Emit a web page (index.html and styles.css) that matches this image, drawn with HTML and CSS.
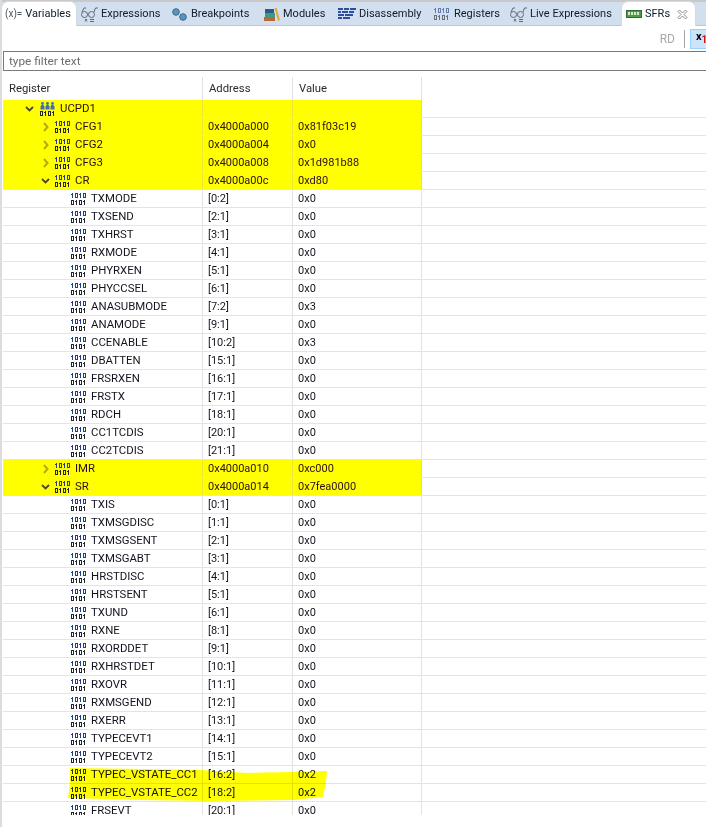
FILE: index.html
```html
<!DOCTYPE html>
<html lang="en">
<head>
<meta charset="utf-8">
<title>SFRs</title>
<link rel="stylesheet" href="styles.css">
</head>
<body>
<svg class="defs" width="0" height="0" aria-hidden="true">
  <symbol id="bits" viewBox="0 0 15 12">
    <g fill="#1d3f8f">
      <rect x="1" y="0" width="1" height="5"/><rect x="0" y="1" width="1" height="1"/>
      <path d="M4 0h3v5H4zM5 1v3h1V1z" fill-rule="evenodd"/>
      <rect x="9" y="0" width="1" height="5"/><rect x="8" y="1" width="1" height="1"/>
      <path d="M12 0h3v5h-3zM13 1v3h1V1z" fill-rule="evenodd"/>
    </g>
    <g fill="#22252b">
      <path d="M0 7h3v5H0zM1 8v3h1V8z" fill-rule="evenodd"/>
      <rect x="5" y="7" width="1" height="5"/><rect x="4" y="8" width="1" height="1"/>
      <path d="M8 7h3v5H8zM9 8v3h1V8z" fill-rule="evenodd"/>
      <rect x="13" y="7" width="1" height="5"/><rect x="12" y="8" width="1" height="1"/>
    </g>
  </symbol>
  <symbol id="group" viewBox="0 0 15 14">
    <g fill="#3f6fb5">
      <circle cx="2.500" cy="1.500" r="1.400"/><circle cx="7.500" cy="1.500" r="1.400"/><circle cx="12.500" cy="1.500" r="1.400"/>
      <path d="M.5 7.500V4.500L1.500 3h2l1 1.500v3zM5.500 7.500V4.500L6.500 3h2l1 1.500v3zM10.500 7.500V4.500L11.500 3h2l1 1.500v3z"/>
    </g>
    <g fill="#22252b">
      <path d="M0 9h3v5H0zM1 10v3h1v-3z" fill-rule="evenodd"/>
      <rect x="5" y="9" width="1" height="5"/><rect x="4" y="10" width="1" height="1"/>
      <path d="M8 9h3v5H8zM9 10v3h1v-3z" fill-rule="evenodd"/>
      <rect x="13" y="9" width="1" height="5"/><rect x="12" y="10" width="1" height="1"/>
    </g>
  </symbol>
  <symbol id="open" viewBox="0 0 9 6"><path d="M1 1l3.500 3.500L8 1" fill="none" stroke="#4a4a20" stroke-width="1.800"/></symbol>
  <symbol id="closed" viewBox="0 0 6 10"><path d="M1 1l3.500 4L1 9" fill="none" stroke="#b3ab10" stroke-width="2"/></symbol>
  <symbol id="glasses" viewBox="0 0 18 15">
    <g fill="none" stroke="#5d6b78" stroke-width="1">
      <circle cx="3.500" cy="7.500" r="3"/><circle cx="10.500" cy="7.500" r="3"/>
      <path d="M6.500 7h1M13 5l1.500-4H17M1 5l2-4h2"/>
      <path d="M9 14.500h4M9 12.500h4"/><path d="M4 12l2 2.500M6 12l-2 2.500"/>
    </g>
  </symbol>
</svg>

<div class="tabbar">
  <div class="tab tab-active tab-vars"><span class="var-glyph">(x)=</span><span>Variables</span></div>
  <div class="tab tab-expr"><svg class="ti-glasses"><use href="#glasses"/></svg><span>Expressions</span></div>
  <div class="tab tab-break">
    <svg class="ti-break" viewBox="0 0 15 13"><circle cx="4" cy="4" r="3.300" fill="#5b93bd" stroke="#3a6b8e"/><circle cx="11" cy="9" r="3.300" fill="#5b93bd" stroke="#3a6b8e"/></svg>
    <span>Breakpoints</span></div>
  <div class="tab tab-mod">
    <svg class="ti-mod" viewBox="0 0 16 13"><rect x="0" y="9" width="11" height="4" fill="#b5683a"/><rect x="1" y="5" width="10" height="4" fill="#3e9a82"/><rect x="1" y="1" width="9" height="4" fill="#2b5a8c"/><path d="M10.500 0l2-.5 3.500 12.500-2 1z" fill="#e4a93a"/></svg>
    <span>Modules</span></div>
  <div class="tab tab-dis">
    <svg class="ti-dis" viewBox="0 0 18 12"><g fill="#2b4d9c"><rect width="5" height="2"/><rect x="6" width="5" height="2"/><rect x="12" width="6" height="2"/><rect y="3" width="3" height="2"/><rect x="4" y="3" width="6" height="2"/><rect x="11" y="3" width="5" height="2"/><rect y="6" width="6" height="2"/><rect x="7" y="6" width="8" height="2"/><rect y="9" width="4" height="2"/><rect x="5" y="9" width="7" height="2"/></g></svg>
    <span>Disassembly</span></div>
  <div class="tab tab-reg"><svg class="ti-bits ti-gray"><use href="#bits"/></svg><span>Registers</span></div>
  <div class="tab tab-live"><svg class="ti-glasses"><use href="#glasses"/></svg><span>Live Expressions</span></div>
  <div class="tab tab-active tab-sfr">
    <svg class="ti-chip" viewBox="0 0 16 10"><rect width="15" height="7" x=".5" y="1.500" fill="#4e9a4a" stroke="#2e6a2e"/><g fill="#d9e8c8"><rect x="2" y="3" width="2" height="3"/><rect x="5" y="3" width="2" height="3"/><rect x="8" y="3" width="2" height="3"/><rect x="11" y="3" width="2" height="3"/></g></svg>
    <span>SFRs</span>
    <svg class="ti-close" viewBox="0 0 11 11"><path d="M1 2.500L2.500 1l3 3 3-3L10 2.500l-3 3 3 3L8.500 10l-3-3-3 3L1 8.500l3-3z" fill="#fff" stroke="#8c8c8c"/></svg>
  </div>
</div>

<div class="toolbar">
  <span class="rd">RD</span>
  <span class="tool-sep"></span>
  <span class="tool-btn">x<sub class="tool-sub">1</sub></span>
</div>

<div class="filter">type filter text</div>

<div class="tree">
  <div class="row header"><div class="cell">Register</div><div class="cell">Address</div><div class="cell">Value</div></div>
  <div class="rows">
    <div class="row hl"><div class="cell l0"><svg class="tw-open"><use href="#open"/></svg><svg class="ic-group"><use href="#group"/></svg>UCPD1</div><div class="cell"></div><div class="cell"></div></div>
    <div class="row hl"><div class="cell l1"><svg class="tw-closed"><use href="#closed"/></svg><svg class="ic"><use href="#bits"/></svg>CFG1</div><div class="cell">0x4000a000</div><div class="cell">0x81f03c19</div></div>
    <div class="row hl"><div class="cell l1"><svg class="tw-closed"><use href="#closed"/></svg><svg class="ic"><use href="#bits"/></svg>CFG2</div><div class="cell">0x4000a004</div><div class="cell">0x0</div></div>
    <div class="row hl"><div class="cell l1"><svg class="tw-closed"><use href="#closed"/></svg><svg class="ic"><use href="#bits"/></svg>CFG3</div><div class="cell">0x4000a008</div><div class="cell">0x1d981b88</div></div>
    <div class="row hl"><div class="cell l1"><svg class="tw-open"><use href="#open"/></svg><svg class="ic"><use href="#bits"/></svg>CR</div><div class="cell">0x4000a00c</div><div class="cell">0xd80</div></div>
    <div class="row"><div class="cell l2"><svg class="ic"><use href="#bits"/></svg>TXMODE</div><div class="cell">[0:2]</div><div class="cell">0x0</div></div>
    <div class="row"><div class="cell l2"><svg class="ic"><use href="#bits"/></svg>TXSEND</div><div class="cell">[2:1]</div><div class="cell">0x0</div></div>
    <div class="row"><div class="cell l2"><svg class="ic"><use href="#bits"/></svg>TXHRST</div><div class="cell">[3:1]</div><div class="cell">0x0</div></div>
    <div class="row"><div class="cell l2"><svg class="ic"><use href="#bits"/></svg>RXMODE</div><div class="cell">[4:1]</div><div class="cell">0x0</div></div>
    <div class="row"><div class="cell l2"><svg class="ic"><use href="#bits"/></svg>PHYRXEN</div><div class="cell">[5:1]</div><div class="cell">0x0</div></div>
    <div class="row"><div class="cell l2"><svg class="ic"><use href="#bits"/></svg>PHYCCSEL</div><div class="cell">[6:1]</div><div class="cell">0x0</div></div>
    <div class="row"><div class="cell l2"><svg class="ic"><use href="#bits"/></svg>ANASUBMODE</div><div class="cell">[7:2]</div><div class="cell">0x3</div></div>
    <div class="row"><div class="cell l2"><svg class="ic"><use href="#bits"/></svg>ANAMODE</div><div class="cell">[9:1]</div><div class="cell">0x0</div></div>
    <div class="row"><div class="cell l2"><svg class="ic"><use href="#bits"/></svg>CCENABLE</div><div class="cell">[10:2]</div><div class="cell">0x3</div></div>
    <div class="row"><div class="cell l2"><svg class="ic"><use href="#bits"/></svg>DBATTEN</div><div class="cell">[15:1]</div><div class="cell">0x0</div></div>
    <div class="row"><div class="cell l2"><svg class="ic"><use href="#bits"/></svg>FRSRXEN</div><div class="cell">[16:1]</div><div class="cell">0x0</div></div>
    <div class="row"><div class="cell l2"><svg class="ic"><use href="#bits"/></svg>FRSTX</div><div class="cell">[17:1]</div><div class="cell">0x0</div></div>
    <div class="row"><div class="cell l2"><svg class="ic"><use href="#bits"/></svg>RDCH</div><div class="cell">[18:1]</div><div class="cell">0x0</div></div>
    <div class="row"><div class="cell l2"><svg class="ic"><use href="#bits"/></svg>CC1TCDIS</div><div class="cell">[20:1]</div><div class="cell">0x0</div></div>
    <div class="row"><div class="cell l2"><svg class="ic"><use href="#bits"/></svg>CC2TCDIS</div><div class="cell">[21:1]</div><div class="cell">0x0</div></div>
    <div class="row hl"><div class="cell l1"><svg class="tw-closed"><use href="#closed"/></svg><svg class="ic"><use href="#bits"/></svg>IMR</div><div class="cell">0x4000a010</div><div class="cell">0xc000</div></div>
    <div class="row hl"><div class="cell l1"><svg class="tw-open"><use href="#open"/></svg><svg class="ic"><use href="#bits"/></svg>SR</div><div class="cell">0x4000a014</div><div class="cell">0x7fea0000</div></div>
    <div class="row"><div class="cell l2"><svg class="ic"><use href="#bits"/></svg>TXIS</div><div class="cell">[0:1]</div><div class="cell">0x0</div></div>
    <div class="row"><div class="cell l2"><svg class="ic"><use href="#bits"/></svg>TXMSGDISC</div><div class="cell">[1:1]</div><div class="cell">0x0</div></div>
    <div class="row"><div class="cell l2"><svg class="ic"><use href="#bits"/></svg>TXMSGSENT</div><div class="cell">[2:1]</div><div class="cell">0x0</div></div>
    <div class="row"><div class="cell l2"><svg class="ic"><use href="#bits"/></svg>TXMSGABT</div><div class="cell">[3:1]</div><div class="cell">0x0</div></div>
    <div class="row"><div class="cell l2"><svg class="ic"><use href="#bits"/></svg>HRSTDISC</div><div class="cell">[4:1]</div><div class="cell">0x0</div></div>
    <div class="row"><div class="cell l2"><svg class="ic"><use href="#bits"/></svg>HRSTSENT</div><div class="cell">[5:1]</div><div class="cell">0x0</div></div>
    <div class="row"><div class="cell l2"><svg class="ic"><use href="#bits"/></svg>TXUND</div><div class="cell">[6:1]</div><div class="cell">0x0</div></div>
    <div class="row"><div class="cell l2"><svg class="ic"><use href="#bits"/></svg>RXNE</div><div class="cell">[8:1]</div><div class="cell">0x0</div></div>
    <div class="row"><div class="cell l2"><svg class="ic"><use href="#bits"/></svg>RXORDDET</div><div class="cell">[9:1]</div><div class="cell">0x0</div></div>
    <div class="row"><div class="cell l2"><svg class="ic"><use href="#bits"/></svg>RXHRSTDET</div><div class="cell">[10:1]</div><div class="cell">0x0</div></div>
    <div class="row"><div class="cell l2"><svg class="ic"><use href="#bits"/></svg>RXOVR</div><div class="cell">[11:1]</div><div class="cell">0x0</div></div>
    <div class="row"><div class="cell l2"><svg class="ic"><use href="#bits"/></svg>RXMSGEND</div><div class="cell">[12:1]</div><div class="cell">0x0</div></div>
    <div class="row"><div class="cell l2"><svg class="ic"><use href="#bits"/></svg>RXERR</div><div class="cell">[13:1]</div><div class="cell">0x0</div></div>
    <div class="row"><div class="cell l2"><svg class="ic"><use href="#bits"/></svg>TYPECEVT1</div><div class="cell">[14:1]</div><div class="cell">0x0</div></div>
    <div class="row"><div class="cell l2"><svg class="ic"><use href="#bits"/></svg>TYPECEVT2</div><div class="cell">[15:1]</div><div class="cell">0x0</div></div>
    <div class="row"><div class="cell l2"><svg class="ic"><use href="#bits"/></svg>TYPEC_VSTATE_CC1</div><div class="cell">[16:2]</div><div class="cell">0x2</div></div>
    <div class="row"><div class="cell l2"><svg class="ic"><use href="#bits"/></svg>TYPEC_VSTATE_CC2</div><div class="cell">[18:2]</div><div class="cell">0x2</div></div>
    <div class="row"><div class="cell l2"><svg class="ic"><use href="#bits"/></svg>FRSEVT</div><div class="cell">[20:1]</div><div class="cell">0x0</div></div>
    <svg class="marker" viewBox="0 0 706 827"><path d="M70 768L143 769L200 770L247 773L290 772L327 771L326 782L323 797L293 800L210 801L140 800L68 798L70 783z" fill="#ffff00"/></svg>
  </div>
</div>
</body>
</html>
```

FILE: styles.css
```css
* { box-sizing: border-box; }
html, body { margin: 0; height: 100%; }
body {
  width: 706px; height: 827px; overflow: hidden; background: #fff;
  font: 11px/18px Roboto, "Open Sans", sans-serif; color: #14141f;
  border-left: 2px solid #dcdcdc; position: relative;
}
.defs { position: absolute; }
svg { display: block; flex: none; }

.tabbar {
  display: flex; height: 26px; margin-left: -2px; background: #d1dfee;
  border-top: 2px solid #c9c9c9; border-bottom: 1px solid #b9c8d8;
}
.tab { display: flex; align-items: center; height: 24px; white-space: nowrap; color: #101c2a; flex: none; font-size: 11px; }
.tab-active { background: #fff; border: 1px solid #d5dbe2; border-bottom: 0; border-radius: 7px 7px 0 0; height: 25px; margin-top: -1px; }
.tab-vars { width: 76px; margin-left: 1px; padding-left: 3px; gap: 3px; }
.var-glyph { color: #4a5560; font-size: 10px; }
.tab-expr { width: 95px; padding-left: 4px; gap: 2px; }
.tab-break { width: 92px; gap: 4px; }
.tab-mod { width: 74px; gap: 3px; }
.tab-dis { width: 96px; gap: 3px; }
.tab-reg { width: 76px; gap: 5px; }
.tab-live { width: 111px; gap: 2px; }
.tab-sfr { width: 75px; padding-left: 4px; gap: 3px; }
.ti-glasses { width: 18px; height: 15px; }
.ti-break { width: 15px; height: 13px; }
.ti-mod { width: 16px; height: 13px; }
.ti-dis { width: 18px; height: 12px; }
.ti-bits { width: 15px; height: 12px; }
.ti-gray { opacity: .6; }
.ti-chip { width: 16px; height: 10px; }
.ti-close { width: 11px; height: 11px; margin-left: 4px; }

.toolbar { display: flex; align-items: center; justify-content: flex-end; height: 24px; color: #a8a8a8; margin-top: 1px; font-size: 12px; }
.rd { margin-right: 9px; }
.tool-sep { width: 1px; height: 18px; background: #a5a5a5; margin-right: 5px; }
.tool-btn { width: 16px; height: 20px; background: #cce4f7; border: 1px solid #99d1ff; border-right: 0; color: #000; padding-left: 5px; font-weight: 700; line-height: 14px; font-size: 11px; }
.tool-sub { color: #d01010; font-size: 10px; line-height: 0; }

.filter { height: 20px; margin: 0 0 0 1px; border: 1px solid #7a7a7a; border-right: 0; color: #6d6d6d; padding-left: 5px; line-height: 18px; font-size: 11.800px; }

.tree { margin-top: 6px; margin-left: 1px; }
.row { display: grid; grid-template-columns: 200px 90px 129px; height: 18px; border-bottom: 1px solid #e4e4e4; }
.cell { display: flex; align-items: center; padding-left: 5px; border-right: 1px solid #e2e2e2; white-space: nowrap; height: 17px; }
.header { height: 23px; border-bottom: 0; }
.header .cell { height: 23px; padding-left: 6px; color: #2a2a2a; font-size: 11.300px; }
.rows { height: 715px; overflow: hidden; position: relative; }
.hl .cell { background: #ffff00; border-right-color: #e9e930; color: #2a1018; }
.marker { position: absolute; left: -3px; top: -100px; width: 706px; height: 827px; mix-blend-mode: multiply; pointer-events: none; }

.l0, .l1, .l2 { font-size: 11.400px; padding-bottom: 1px; }
.l0 svg, .l1 svg, .l2 svg { margin-top: 1px; }
.l0 { padding-left: 22px; }
.l1 { padding-left: 40px; }
.l2 { padding-left: 68px; }
.l1:has(.tw-open) { padding-left: 38px; }
.tw-open { width: 9px; height: 6px; margin-right: 5px; }
.tw-closed { width: 6px; height: 10px; margin-right: 6px; }
.ic { width: 15px; height: 12px; margin-right: 5px; }
.ic-group { width: 15px; height: 14px; margin-right: 5px; margin-left: 1px; }
```
